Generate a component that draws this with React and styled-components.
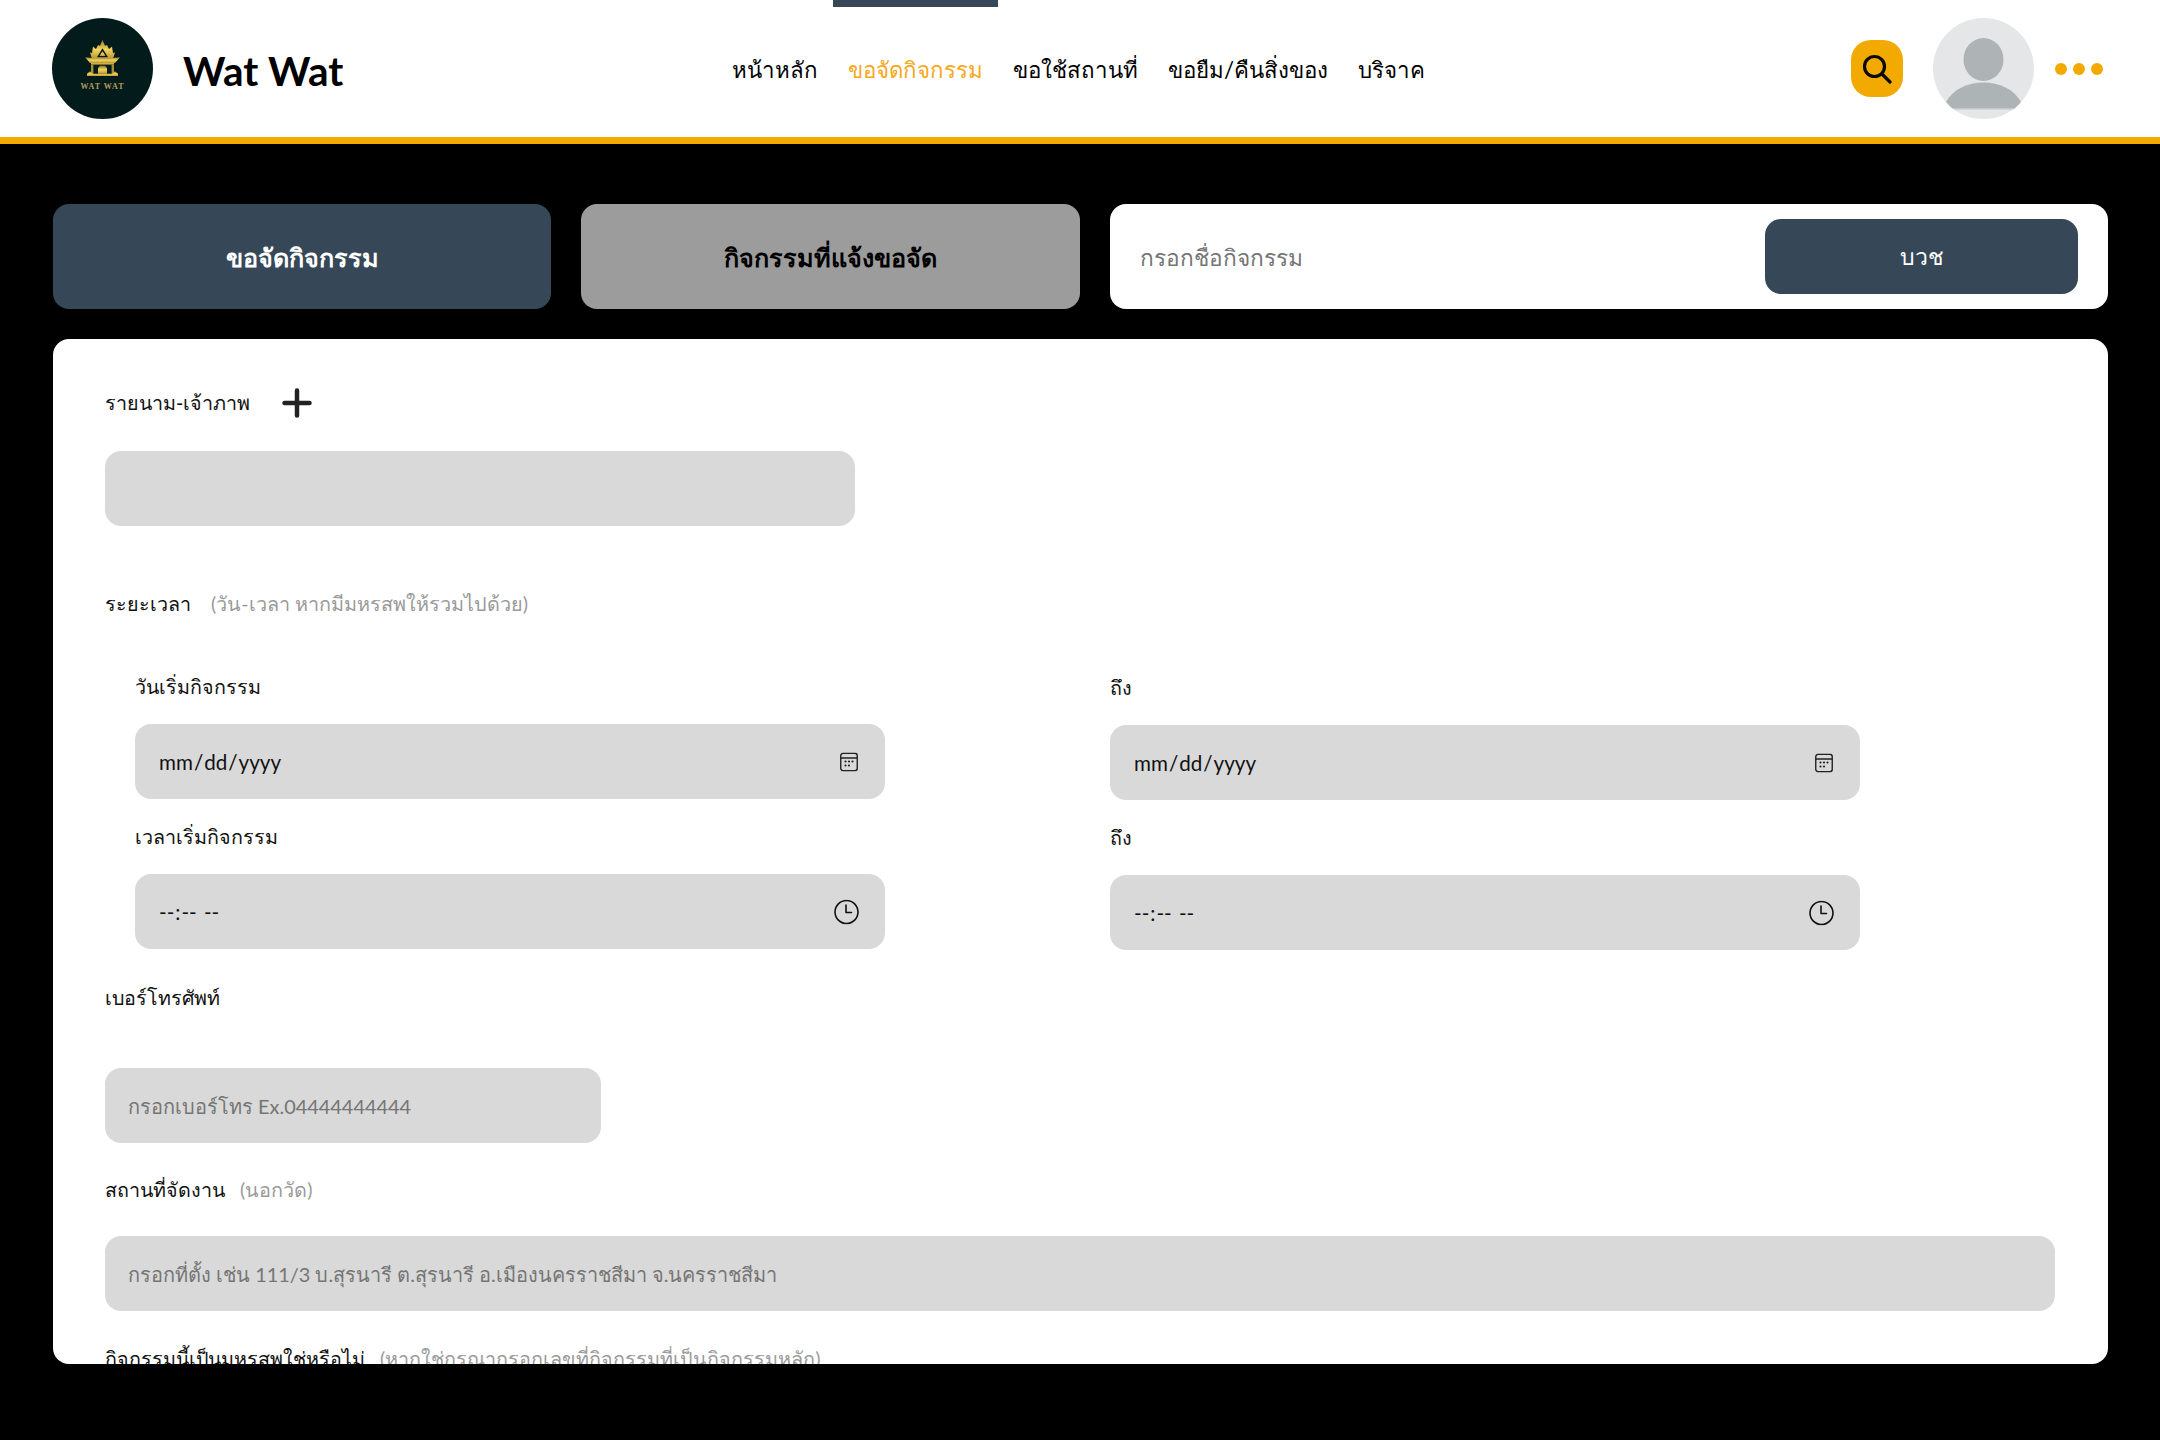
import React from "react";
import styled, { createGlobalStyle } from "styled-components";

const Global = createGlobalStyle`
  html, body { margin: 0; padding: 0; background: #000; }
  * { box-sizing: border-box; }
  body { font-family: "Lato", "Noto Sans", sans-serif; color: #111; }
`;

const Page = styled.div`width: 2160px; height: 1440px; background: #000; overflow: hidden;`;
const Header = styled.header`
  height: 144px; background: #fff; border-bottom: 7px solid #f2a900;
  display: flex; align-items: center; padding: 0 57px 0 52px;
`;
const Brand = styled.div`display: flex; align-items: center; gap: 30px; width: 665px;`;
const LogoSvg = styled.svg`width: 101px; height: 101px; flex: none;`;
const BrandName = styled.div`font-size: 40.5px; font-weight: 700; color: #000; padding-top: 3px;`;
const Nav = styled.nav`display: flex; flex: 1; align-self: stretch; align-items: center;`;
const NavItem = styled.a`
  position: relative; padding: 0 15px; font-size: 22.3px; line-height: 139px; height: 137px;
  color: ${p => (p.$active ? "#f7a81b" : "#000")};
  &::before {
    content: ""; display: ${p => (p.$active ? "block" : "none")};
    position: absolute; left: 0; right: 0; top: 0; height: 7px; background: #364858;
  }
`;
const Tools = styled.div`display: flex; align-items: center;`;
const SearchBtn = styled.button`
  width: 52px; height: 57px; border: 0; border-radius: 20px; background: #f2a900;
  display: flex; align-items: center; justify-content: center; padding: 0; margin-right: 30px;
`;
const AvatarSvg = styled.svg`width: 101px; height: 101px; margin-right: 21px;`;
const Dots = styled.div`display: flex; gap: 6px;`;
const Dot = styled.span`width: 12px; height: 12px; border-radius: 50%; background: #f2a900;`;

const Body = styled.main`padding: 60px 52px 0 53px; display: flex; flex-direction: column; gap: 30px;`;
const TopRow = styled.div`display: flex; gap: 30px; height: 105px;`;
const Tab = styled.div`
  width: ${p => p.$w}px; border-radius: 16px; display: flex; align-items: center; justify-content: center;
  font-size: 25.2px; font-weight: 600; padding-top: 2px;
  background: ${p => (p.$active ? "#364858" : "#9c9c9c")};
  color: ${p => (p.$active ? "#fff" : "#000")};
`;
const SearchCard = styled.div`
  flex: 1; background: #fff; border-radius: 16px; display: flex; align-items: center; padding: 0 30px;
`;
const SearchInput = styled.input`
  flex: 1; border: 0; outline: 0; background: transparent; font: inherit; font-size: 22.7px; padding: 2px 0 0; min-width: 0;
  &::placeholder { color: #757575; opacity: 1; }
`;
const OrdainBtn = styled.button`
  width: 313px; height: 75px; border: 0; border-radius: 16px; background: #364858; color: #fff;
  font: inherit; font-size: 23px; padding-top: 2px;
`;
const Card = styled.section`
  height: 1025px; background: #fff; border-radius: 16px; overflow: hidden; padding: 46px 53px 0 52px;
`;
const LabelRow = styled.div`
  display: flex; align-items: center; height: 34px; margin-top: ${p => p.$top || 0}px; padding-top: 2px;
  font-size: 20px; white-space: nowrap;
`;
const Strong = styled.span`font-size: 19.7px; font-weight: 500; color: #111;`;
const Hint = styled.span`font-size: 19.8px; color: #9a9a9a; margin-left: ${p => p.$gap || 20}px;`;
const PlusSvg = styled.svg`width: 30px; height: 30px; margin-left: 32px;`;
const Field = styled.input`
  display: block; width: ${p => p.$w || "750px"}; height: 75px; margin-top: ${p => p.$top || 0}px;
  border: 0; outline: 0; border-radius: 16px; background: #d9d9d9; padding: 0 23px;
  font: inherit; font-size: 20.6px; color: #111;
  &::placeholder { color: #757575; opacity: 1; font-size: 19.9px; }
  &::-webkit-calendar-picker-indicator { opacity: 0; }
`;
const PickerWrap = styled.div`position: relative; margin-top: 21px; width: 750px;`;
const PickerIcon = styled.svg`
  position: absolute; top: 50%; right: ${p => p.$right}px; transform: translateY(-50%); pointer-events: none;
`;
const Columns = styled.div`display: flex; gap: 225px; padding-left: 30px;`;
const Column = styled.div`width: 750px; padding-top: ${p => p.$shift || 0}px;`;

function Logo() {
  return (
    <LogoSvg viewBox="0 0 101 101">
      <defs>
        <linearGradient id="gold" x1="0" y1="0" x2="0" y2="1">
          <stop offset="0" stopColor="#8f7a2c" />
          <stop offset="0.5" stopColor="#f4d35e" />
          <stop offset="1" stopColor="#b8982f" />
        </linearGradient>
      </defs>
      <circle cx="50.5" cy="50.5" r="50.5" fill="#031b1b" />
      <g transform="translate(0 4) scale(1 0.82)">
        <path fill="url(#gold)" d="M50.5 22l2.5 7 2-1 2 5 3-3 1 8 2-1-2 8h-21l-2-8 2 1 1-8 3 3 2-5 2 1z" />
        <path fill="#031b1b" d="M50.5 32l5.500 11h-11z" />
        <path fill="url(#gold)" d="M50.5 35.5l3 6h-6z" />
        <path fill="url(#gold)" d="M33 43l8 1h19l8-1-5 7H38z" />
        <rect x="39" y="50" width="23" height="2" fill="url(#gold)" />
        <rect x="39" y="52" width="2.4" height="11" fill="#a98f2f" />
        <rect x="59.6" y="52" width="2.4" height="11" fill="#a98f2f" />
        <path fill="url(#gold)" d="M46 63v-7l2-2.500h5l2 2.500v7z" />
        <path fill="url(#gold)" d="M35 63l3-3 3 3h19l3-3 3 3v3H35z" />
      </g>
      <text x="50.5" y="71" textAnchor="middle" fontFamily="'Liberation Serif', serif" fontWeight="700" fontSize="8" letterSpacing="1" fill="#b3a05a">WAT WAT</text>
    </LogoSvg>
  );
}

function Avatar() {
  return (
    <AvatarSvg viewBox="0 0 101 101">
      <defs>
        <clipPath id="av"><circle cx="50.5" cy="50.5" r="50.5" /></clipPath>
      </defs>
      <circle cx="50.5" cy="50.5" r="50.5" fill="#e4e6e8" />
      <g clipPath="url(#av)">
        <ellipse cx="50.5" cy="41.5" rx="20" ry="21.5" fill="#aeb3b6" />
        <path fill="#aeb3b6" d="M13 84 C20 71 35 64.5 50.5 64.5 C66 64.5 81 71 88 84 L82 91 H19 Z" />
        <rect x="19" y="90" width="63" height="1.5" fill="#c4c8cb" />
      </g>
    </AvatarSvg>
  );
}

function CalendarIcon() {
  return (
    <PickerIcon $right={27} width="18" height="19" viewBox="0 0 18 19" fill="none">
      <rect x="0.75" y="0.75" width="16.5" height="17.5" rx="2.5" stroke="#222" strokeWidth="1.4" />
      <path d="M1 5.5h16" stroke="#222" strokeWidth="1.4" />
      <g fill="#222">
        <circle cx="5.5" cy="9" r="1.1" /><circle cx="9" cy="9" r="1.1" /><circle cx="12.5" cy="9" r="1.1" />
        <circle cx="5.5" cy="13" r="1.1" /><circle cx="9" cy="13" r="1.1" />
      </g>
    </PickerIcon>
  );
}

function ClockIcon() {
  return (
    <PickerIcon $right={26} width="25" height="25" viewBox="0 0 25 25" fill="none" stroke="#111" strokeWidth="1.6" strokeLinecap="round" strokeLinejoin="round">
      <circle cx="12.5" cy="12.5" r="11.5" />
      <path d="M12 5.5v7.5h5.500" />
    </PickerIcon>
  );
}

const DateField = () => (
  <PickerWrap>
    <Field type="date" />
    <CalendarIcon />
  </PickerWrap>
);
const TimeField = () => (
  <PickerWrap>
    <Field type="time" />
    <ClockIcon />
  </PickerWrap>
);

export default function App() {
  return (
    <>
      <Global />
      <Page>
        <Header>
          <Brand>
            <Logo />
            <BrandName>Wat Wat</BrandName>
          </Brand>
          <Nav>
            <NavItem>หน้าหลัก</NavItem>
            <NavItem $active>ขอจัดกิจกรรม</NavItem>
            <NavItem>ขอใช้สถานที่</NavItem>
            <NavItem>ขอยืม/คืนสิ่งของ</NavItem>
            <NavItem>บริจาค</NavItem>
          </Nav>
          <Tools>
            <SearchBtn aria-label="ค้นหา">
              <svg width="30" height="30" viewBox="0 0 30 30" fill="none" stroke="#0a0a0a" strokeLinecap="round">
                <circle cx="12.5" cy="12.5" r="10" strokeWidth="3.2" />
                <path d="M20 20l8 8" strokeWidth="3.2" />
              </svg>
            </SearchBtn>
            <Avatar />
            <Dots><Dot /><Dot /><Dot /></Dots>
          </Tools>
        </Header>
        <Body>
          <TopRow>
            <Tab $active $w={498}>ขอจัดกิจกรรม</Tab>
            <Tab $w={499}>กิจกรรมที่แจ้งขอจัด</Tab>
            <SearchCard>
              <SearchInput placeholder="กรอกชื่อกิจกรรม" />
              <OrdainBtn>บวช</OrdainBtn>
            </SearchCard>
          </TopRow>
          <Card>
            <LabelRow>
              <Strong>รายนาม-เจ้าภาพ</Strong>
              <PlusSvg viewBox="0 0 30 30" fill="none" stroke="#222" strokeWidth="4.5" strokeLinecap="round">
                <path d="M15 2.5v25M2.5 15h25" />
              </PlusSvg>
            </LabelRow>
            <Field $top={32} />
            <LabelRow $top={60}>
              <Strong>ระยะเวลา</Strong>
              <Hint>(วัน-เวลา หากมีมหรสพให้รวมไปด้วย)</Hint>
            </LabelRow>
            <Columns>
              <Column>
                <LabelRow $top={49}><Strong>วันเริ่มกิจกรรม</Strong></LabelRow>
                <DateField />
                <LabelRow $top={20}><Strong>เวลาเริ่มกิจกรรม</Strong></LabelRow>
                <TimeField />
              </Column>
              <Column $shift={1}>
                <LabelRow $top={49}><Strong>ถึง</Strong></LabelRow>
                <DateField />
                <LabelRow $top={20}><Strong>ถึง</Strong></LabelRow>
                <TimeField />
              </Column>
            </Columns>
            <LabelRow $top={30}><Strong>เบอร์โทรศัพท์</Strong></LabelRow>
            <Field $top={54} $w="496px" placeholder="กรอกเบอร์โทร Ex.04444444444" />
            <LabelRow $top={29}>
              <Strong>สถานที่จัดงาน</Strong>
              <Hint $gap={15}>(นอกวัด)</Hint>
            </LabelRow>
            <Field $top={30} $w="100%" placeholder="กรอกที่ตั้ง เช่น 111/3 บ.สุรนารี ต.สุรนารี อ.เมืองนครราชสีมา จ.นครราชสีมา" />
            <LabelRow $top={30}>
              <Strong>กิจกรรมนี้เป็นมหรสพใช่หรือไม่</Strong>
              <Hint $gap={15}>(หากใช่กรุณากรอกเลขที่กิจกรรมที่เป็นกิจกรรมหลัก)</Hint>
            </LabelRow>
          </Card>
        </Body>
      </Page>
    </>
  );
}
